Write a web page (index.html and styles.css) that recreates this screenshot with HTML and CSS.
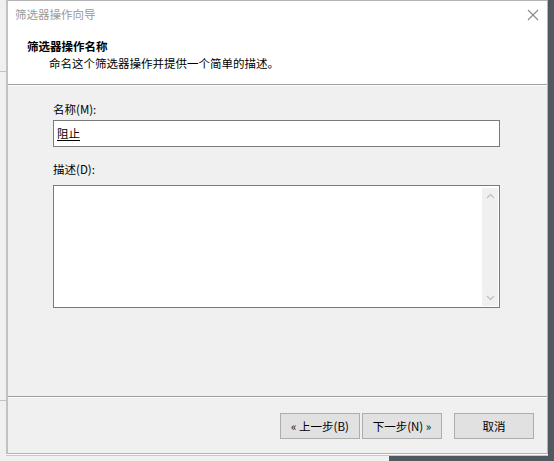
FILE: index.html
```html
<!DOCTYPE html>
<html lang="zh-CN">
<head>
<meta charset="utf-8">
<title>筛选器操作向导</title>
<link rel="stylesheet" href="styles.css">
</head>
<body>
<div class="desktop">
  <div class="desk-dark"></div>
  <div class="desk-bottom"></div>
  <div class="desk-line desk-line-a"></div>
  <div class="desk-line desk-line-b"></div>

  <div class="window">
    <div class="titlebar">
      <span class="title">筛选器操作向导</span>
      <svg class="close" width="12" height="12" viewBox="0 0 12 12">
        <path d="M1 1 L11 11 M11 1 L1 11" stroke="#8a8a8a" stroke-width="1.1" fill="none"/>
      </svg>
    </div>
    <div class="header">
      <div class="h-title">筛选器操作名称</div>
      <div class="h-sub">命名这个筛选器操作并提供一个简单的描述。</div>
    </div>
    <div class="content">
      <div class="label">名称(M):</div>
      <div class="textbox"><span class="value">阻止</span></div>
      <div class="label label-desc">描述(D):</div>
      <div class="textarea">
        <div class="scrollbar">
          <svg width="9" height="6" viewBox="0 0 9 6"><path d="M1 5 L4.5 1.5 L8 5" stroke="#c2c2c2" stroke-width="1.3" fill="none"/></svg>
          <svg width="9" height="6" viewBox="0 0 9 6"><path d="M1 1 L4.5 4.5 L8 1" stroke="#c2c2c2" stroke-width="1.3" fill="none"/></svg>
        </div>
      </div>
    </div>
    <div class="footer">
      <div class="btn btn-back">« 上一步(B)</div>
      <div class="btn btn-next">下一步(N) »</div>
      <div class="btn btn-cancel">取消</div>
    </div>
  </div>
</div>
</body>
</html>
```
FILE: styles.css
```css
html, body {
  margin: 0;
  padding: 0;
}
body {
  width: 554px;
  height: 461px;
  overflow: hidden;
  font-family: "Noto Sans CJK SC", "Noto Sans", sans-serif;
  font-size: 11.5px;
  color: #000;
  background: #f0f0f0;
}
.desktop {
  position: relative;
  width: 554px;
  height: 461px;
}
.desk-dark {
  position: absolute;
  left: 540px;
  top: 0;
  width: 14px;
  height: 461px;
  background: #51585f;
}
.desk-bottom {
  position: absolute;
  left: 389px;
  top: 454px;
  width: 165px;
  height: 7px;
  background: #51585f;
}
.desk-line {
  position: absolute;
  left: 0;
  width: 6px;
  height: 1px;
  background: #c4c4c4;
}
.desk-line-a { top: 71px; }
.desk-line-b { top: 400px; }

.window {
  position: absolute;
  left: 6px;
  top: 0;
  width: 539px;
  height: 452px;
  border: 1px solid #b4b4b4;
  border-left-width: 2px;
  border-left-color: #c2c2c2;
  background: #f0f0f0;
  display: flex;
  flex-direction: column;
  box-shadow: 0 1px 0 #fafafa, 0 2px 0 #c8c8c8;
}
.titlebar {
  height: 28px;
  background: #fff;
  display: flex;
  align-items: center;
  justify-content: space-between;
  padding: 0 7px 0 7px;
}
.title {
  color: #9a9a9a;
  line-height: 17px;
  margin-top: -1px;
}
.close {
  margin-right: 1px;
  margin-top: -1px;
}
.header {
  background: #fff;
  height: 46px;
  padding-top: 9px;
  border-bottom: 1px solid #a0a0a0;
  box-shadow: 0 1px 0 #fdfdfd;
}
.h-title {
  font-weight: bold;
  line-height: 17px;
  padding-left: 19px;
}
.h-sub {
  line-height: 17px;
  padding-left: 41px;
}
.content {
  flex: 1;
  padding: 16px 0 0 45px;
  border-bottom: 1px solid #a0a0a0;
  box-shadow: 0 1px 0 #fff;
}
.label {
  line-height: 17px;
  height: 17px;
}
.textbox {
  margin-top: 2px;
  width: 442px;
  height: 25px;
  border: 1px solid #7a7a7a;
  background: #fff;
  display: flex;
  align-items: center;
  padding-left: 3px;
}
.value {
  text-decoration: underline;
  text-underline-offset: 2px;
  line-height: 17px;
}
.label-desc {
  margin-top: 14px;
}
.textarea {
  margin-top: 7px;
  width: 444px;
  height: 118px;
  border: 1px solid #7a7a7a;
  background: #fff;
  display: flex;
  justify-content: flex-end;
  padding: 2px 1px 1px 0;
}
.scrollbar {
  width: 16px;
  background: #f0f0f0;
  display: flex;
  flex-direction: column;
  justify-content: space-between;
  align-items: center;
  padding: 5px 0 5px;
}
.footer {
  height: 56px;
  display: flex;
  align-items: flex-start;
  padding: 16px 0 0 272px;
  box-sizing: border-box;
}
.btn {
  width: 78px;
  height: 24px;
  border: 1px solid #adadad;
  background: #e1e1e1;
  display: flex;
  align-items: center;
  justify-content: center;
  line-height: 17px;
}
.btn-next {
  margin-left: 2px;
}
.btn-cancel {
  margin-left: 12px;
}
```
